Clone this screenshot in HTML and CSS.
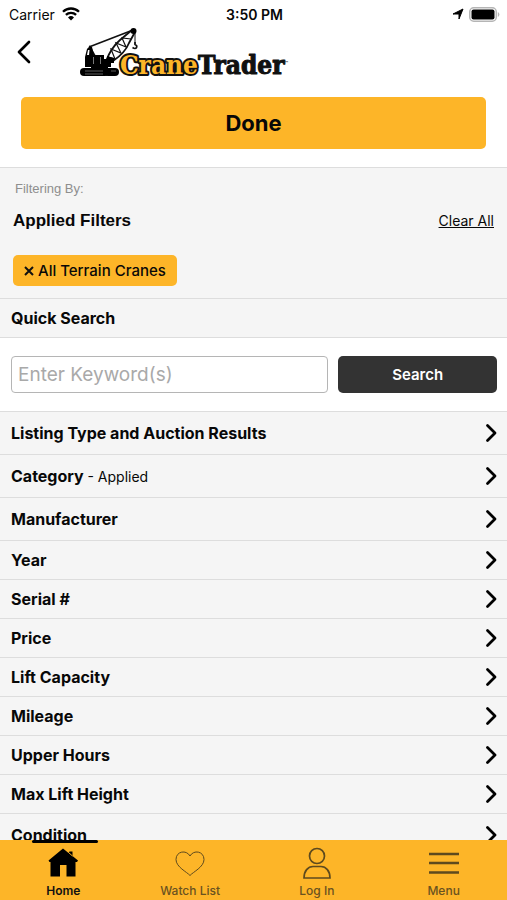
FILE: index.html
```html
<!DOCTYPE html>
<html lang="en">
<head>
<meta charset="utf-8">
<meta name="viewport" content="width=device-width, initial-scale=1">
<title>CraneTrader - Filters</title>
<link rel="stylesheet" href="styles.css">
</head>
<body>
<svg class="defs" aria-hidden="true">
  <symbol id="chevron" viewBox="0 0 12 20"><path d="M2.500 2.500l7.500 7.500-7.500 7.500" fill="none" stroke="#000" stroke-width="2.8" stroke-linecap="round" stroke-linejoin="round"/></symbol>
</svg>
<div class="status">
  <div class="carrier">Carrier
    <svg width="18" height="14" viewBox="0 0 18 14" aria-hidden="true"><path d="M1 4.8a11.4 11.4 0 0 1 16 0M3.9 7.9a7.3 7.3 0 0 1 10.2 0" fill="none" stroke="#000" stroke-width="2.3"/><path d="M6 10.4a4.4 4.4 0 0 1 6 0L9 13.5z"/></svg>
  </div>
  <div class="time">3:50 PM</div>
  <div class="indicators">
    <svg width="12" height="12" viewBox="0 0 12 12" aria-hidden="true"><path d="M11 1L7 11V6H1z" stroke="#000" stroke-linejoin="round"/></svg>
    <svg width="31" height="15" viewBox="0 0 31 15" aria-hidden="true"><rect x=".75" y=".75" width="26.5" height="13.5" rx="4" fill="#fff" stroke="#b5b5b5" stroke-width="1.5"/><rect x="2.500" y="2.500" width="23" height="10" rx="2"/><path d="M28.8 5v5q1.6-.8 1.6-2.5T28.8 5" fill="#b5b5b5"/></svg>
  </div>
</div>
<header class="header">
  <button class="back" type="button" aria-label="Back"><svg width="14" height="24" viewBox="0 0 14 24"><path d="M12 2L2 12l10 10" fill="none" stroke="#000" stroke-width="2.7" stroke-linecap="round" stroke-linejoin="round"/></svg></button>
  <svg class="logo" width="212" height="52" viewBox="0 0 212 52" role="img" aria-label="CraneTrader">
    <g fill="none" stroke="#111">
      <path d="M9 19L53 2" stroke-width="1.6"/>
      <path d="M26 33Q31 20 40 12L52 2" stroke-width="1.8"/>
      <path d="M33 33Q45 25 49 15L55 4" stroke-width="1.8"/>
      <path d="M28 29l7 2-4-10 10 4-5-10 10 4-4-9 9 1" stroke-width="1.2"/>
      <path d="M55 4v12" stroke-width="1"/>
      <path d="M55 14v2.500q2.500 1 1.500 3t-4 0" stroke-width="1.7"/>
      <path d="M6 31l4-12 5 9M10 19v10" stroke-width="1.7"/>
    </g>
    <circle cx="53.500" cy="3" r="3"/>
    <path d="M5 39V29l2-8q2-3 5-2l2 8h10v4h3v-3l7 2v5h-3v4z"/>
    <path d="M8 22h1.500l-.5 5H7z" fill="#fff"/>
    <path d="M13 29h1v7h-1zM20 29h1v7h-1z" fill="#777"/>
    <path d="M11 38h17v4H11z"/>
    <rect x="24" y="40" width="15" height="8" rx="4"/>
    <rect y="40" width="29" height="8" rx="4"/>
    <path d="M5 43h18M5 46h18M31 43h5" fill="none" stroke="#777" stroke-width=".8"/>
    <g class="wordmark">
      <text x="40" y="46"><tspan class="crane">Crane</tspan><tspan class="trader">Trader</tspan></text>
    </g>
    <text class="tm" x="205" y="37">™</text>
  </svg>
</header>
<main class="content">
  <div class="done-wrap"><button class="done" type="button">Done</button></div>
  <section class="applied">
    <p class="filtering">Filtering By:</p>
    <div class="applied-head"><h2>Applied Filters</h2><a href="#">Clear All</a></div>
    <button class="chip" type="button"><svg width="10" height="10" viewBox="0 0 10 10" aria-hidden="true"><path d="M1 1l8 8M9 1L1 9" stroke="#111" stroke-width="2"/></svg>All Terrain Cranes</button>
  </section>
  <h2 class="quick"><label for="keywords">Quick Search</label></h2>
  <form class="search"><input id="keywords" type="text" placeholder="Enter Keyword(s)"><button type="button">Search</button></form>
  <div class="filters">
    <button class="row tall" type="button"><span>Listing Type and Auction Results</span><svg><use href="#chevron"/></svg></button>
    <button class="row tall" type="button"><span>Category <small>- Applied</small></span><svg><use href="#chevron"/></svg></button>
    <button class="row tall" type="button"><span>Manufacturer</span><svg><use href="#chevron"/></svg></button>
    <button class="row" type="button"><span>Year</span><svg><use href="#chevron"/></svg></button>
    <button class="row" type="button"><span>Serial #</span><svg><use href="#chevron"/></svg></button>
    <button class="row" type="button"><span>Price</span><svg><use href="#chevron"/></svg></button>
    <button class="row" type="button"><span>Lift Capacity</span><svg><use href="#chevron"/></svg></button>
    <button class="row" type="button"><span>Mileage</span><svg><use href="#chevron"/></svg></button>
    <button class="row" type="button"><span>Upper Hours</span><svg><use href="#chevron"/></svg></button>
    <button class="row" type="button"><span>Max Lift Height</span><svg><use href="#chevron"/></svg></button>
    <button class="row tall" type="button"><span>Condition</span><svg><use href="#chevron"/></svg></button>
  </div>
</main>
<nav class="tabs">
  <a class="active" href="#"><svg width="32" height="32" viewBox="0 0 32 32" aria-hidden="true"><path d="M1.500 13.500L16 1.500l5.500 4.500 1-1.500h3v4.500l5.500 4.500-1 1.500h-1.500v14.500h-9V18h-6.500v11.500H3.500V15H2.500z" fill="#000"/><path d="M21.500 5.500l4 3.500" stroke="#fdb528"/></svg>Home</a>
  <a href="#"><svg width="32" height="32" viewBox="0 0 32 32" aria-hidden="true"><path d="M16 28.500C13 25 2 20 2 12.500 2 4 12.500 2.500 16 9c3.500-6.500 14-5 14 3.500C30 20 19 25 16 28.500z"/></svg>Watch List</a>
  <a href="#"><svg width="32" height="32" viewBox="0 0 32 32" aria-hidden="true"><g stroke-width="1.700"><circle cx="16" cy="9" r="7.500"/><path d="M3 31c0-7 4-11.500 9-11.500h8c5 0 9 4.500 9 11.500z"/></g></svg>Log In</a>
  <a href="#"><svg width="32" height="32" viewBox="0 0 32 32" aria-hidden="true"><path d="M1 7h30M1 16h30M1 25.500h30" stroke-width="2.700"/></svg>Menu</a>
</nav>
</body>
</html>
```
FILE: styles.css
```css
* { box-sizing: border-box; }
body {
  margin: 0;
  height: 100vh;
  display: flex;
  flex-direction: column;
  overflow: hidden;
  background: #fff;
  color: #080808;
  font-family: Inter, "Liberation Sans", sans-serif;
}
button { border: 0; margin: 0; color: inherit; font-family: inherit; }
h2, p { margin: 0; }
.defs { position: absolute; width: 0; height: 0; }
.status {
  display: grid;
  grid-template-columns: 1fr auto 1fr;
  align-items: center;
  height: 28px;
  padding: 0 7px 0 9px;
  font-size: 14px;
  flex: none;
}
.carrier { display: flex; align-items: center; gap: 7px; }
.time { font-weight: 600; }
.indicators { display: flex; align-items: center; justify-content: flex-end; gap: 5px; }
.header { display: flex; align-items: flex-start; gap: 45px; padding: 0 13px; flex: none; }
.back { padding: 12px 4px; background: none; line-height: 0; width: 22px; }
.logo { display: block; overflow: visible; }
.wordmark {
  font-family: "DejaVu Serif Condensed", "DejaVu Serif", serif;
  font-size: 26px;
  font-weight: 700;
  paint-order: stroke;
  stroke: #111;
  stroke-linejoin: round;
}
.crane { fill: #fdb528; stroke-width: 4px; }
.trader { fill: #111; stroke-width: 1px; }
.tm { font-size: 5px; }
.content { flex: 1; min-height: 0; overflow: hidden; }
.done-wrap { padding: 17px 21px 18px; border-bottom: 1px solid #ddd; }
.done {
  display: block;
  width: 100%;
  height: 52px;
  border-radius: 5px;
  background: #fdb528;
  font-size: 22px;
  font-weight: 700;
}
.applied { padding: 13px 13px 12px; background: #f5f5f5; }
.filtering {
  padding-left: 2px;
  font: 13px/16px "Liberation Sans", sans-serif;
  color: #8e8e8e;
}
.applied-head { display: flex; justify-content: space-between; align-items: center; padding: 14px 0 24px; line-height: 20px; }
.applied-head h2 { font: bold 17px/20px "Liberation Sans", sans-serif; }
.applied-head a { font-size: 14px; color: inherit; }
.chip {
  display: flex;
  align-items: center;
  gap: 4px;
  height: 31px;
  padding: 0 11px;
  border-radius: 5px;
  background: #fdb528;
  font-size: 15px;
  font-weight: 500;
}
.quick {
  padding: 0 11px;
  border: solid #ddd;
  border-width: 1px 0;
  background: #f5f5f5;
  font-size: 16px;
  line-height: 38px;
  font-weight: 700;
}
.search { display: grid; grid-template-columns: 2fr 1fr; gap: 10px; padding: 18px 10px 18px 11px; }
.search input {
  min-width: 0;
  height: 37px;
  padding: 0 6px;
  border: 1px solid #b5b5b5;
  border-radius: 4px;
  font: 19px Inter, sans-serif;
}
.search input::placeholder { color: #a9a9a9; }
.search button {
  height: 37px;
  padding: 0;
  border-radius: 5px;
  background: #333;
  color: #fff;
  font-size: 15px;
  font-weight: 600;
}
.row {
  display: flex;
  width: 100%;
  height: 39px;
  align-items: center;
  justify-content: space-between;
  padding: 0 10px 0 11px;
  border-top: 1px solid #ddd;
  background: #f5f5f5;
  font-size: 16px;
  font-weight: 700;
  text-align: left;
}
.tall { height: 43px; }
.row small { font-size: 14px; font-weight: 400; }
.row svg { width: 12px; height: 20px; }
.tabs { display: grid; grid-template-columns: repeat(4, 1fr); height: 60px; background: #fdb528; flex: none; }
.tabs a {
  position: relative;
  display: flex;
  flex-direction: column;
  align-items: center;
  padding-top: 7px;
  gap: 4px;
  color: #6a5220;
  text-decoration: none;
  font-size: 12px;
  line-height: 16px;
  font-weight: 500;
}
.tabs svg { fill: none; stroke: #5e4a1e; flex: none; }
.tabs .active { color: #111; font-weight: 600; }
.tabs .active svg { stroke: none; }
.active::before {
  content: "";
  position: absolute;
  top: 0;
  left: 25%;
  width: 66px;
  height: 3px;
  border-radius: 2px;
  background: #000;
}
```
